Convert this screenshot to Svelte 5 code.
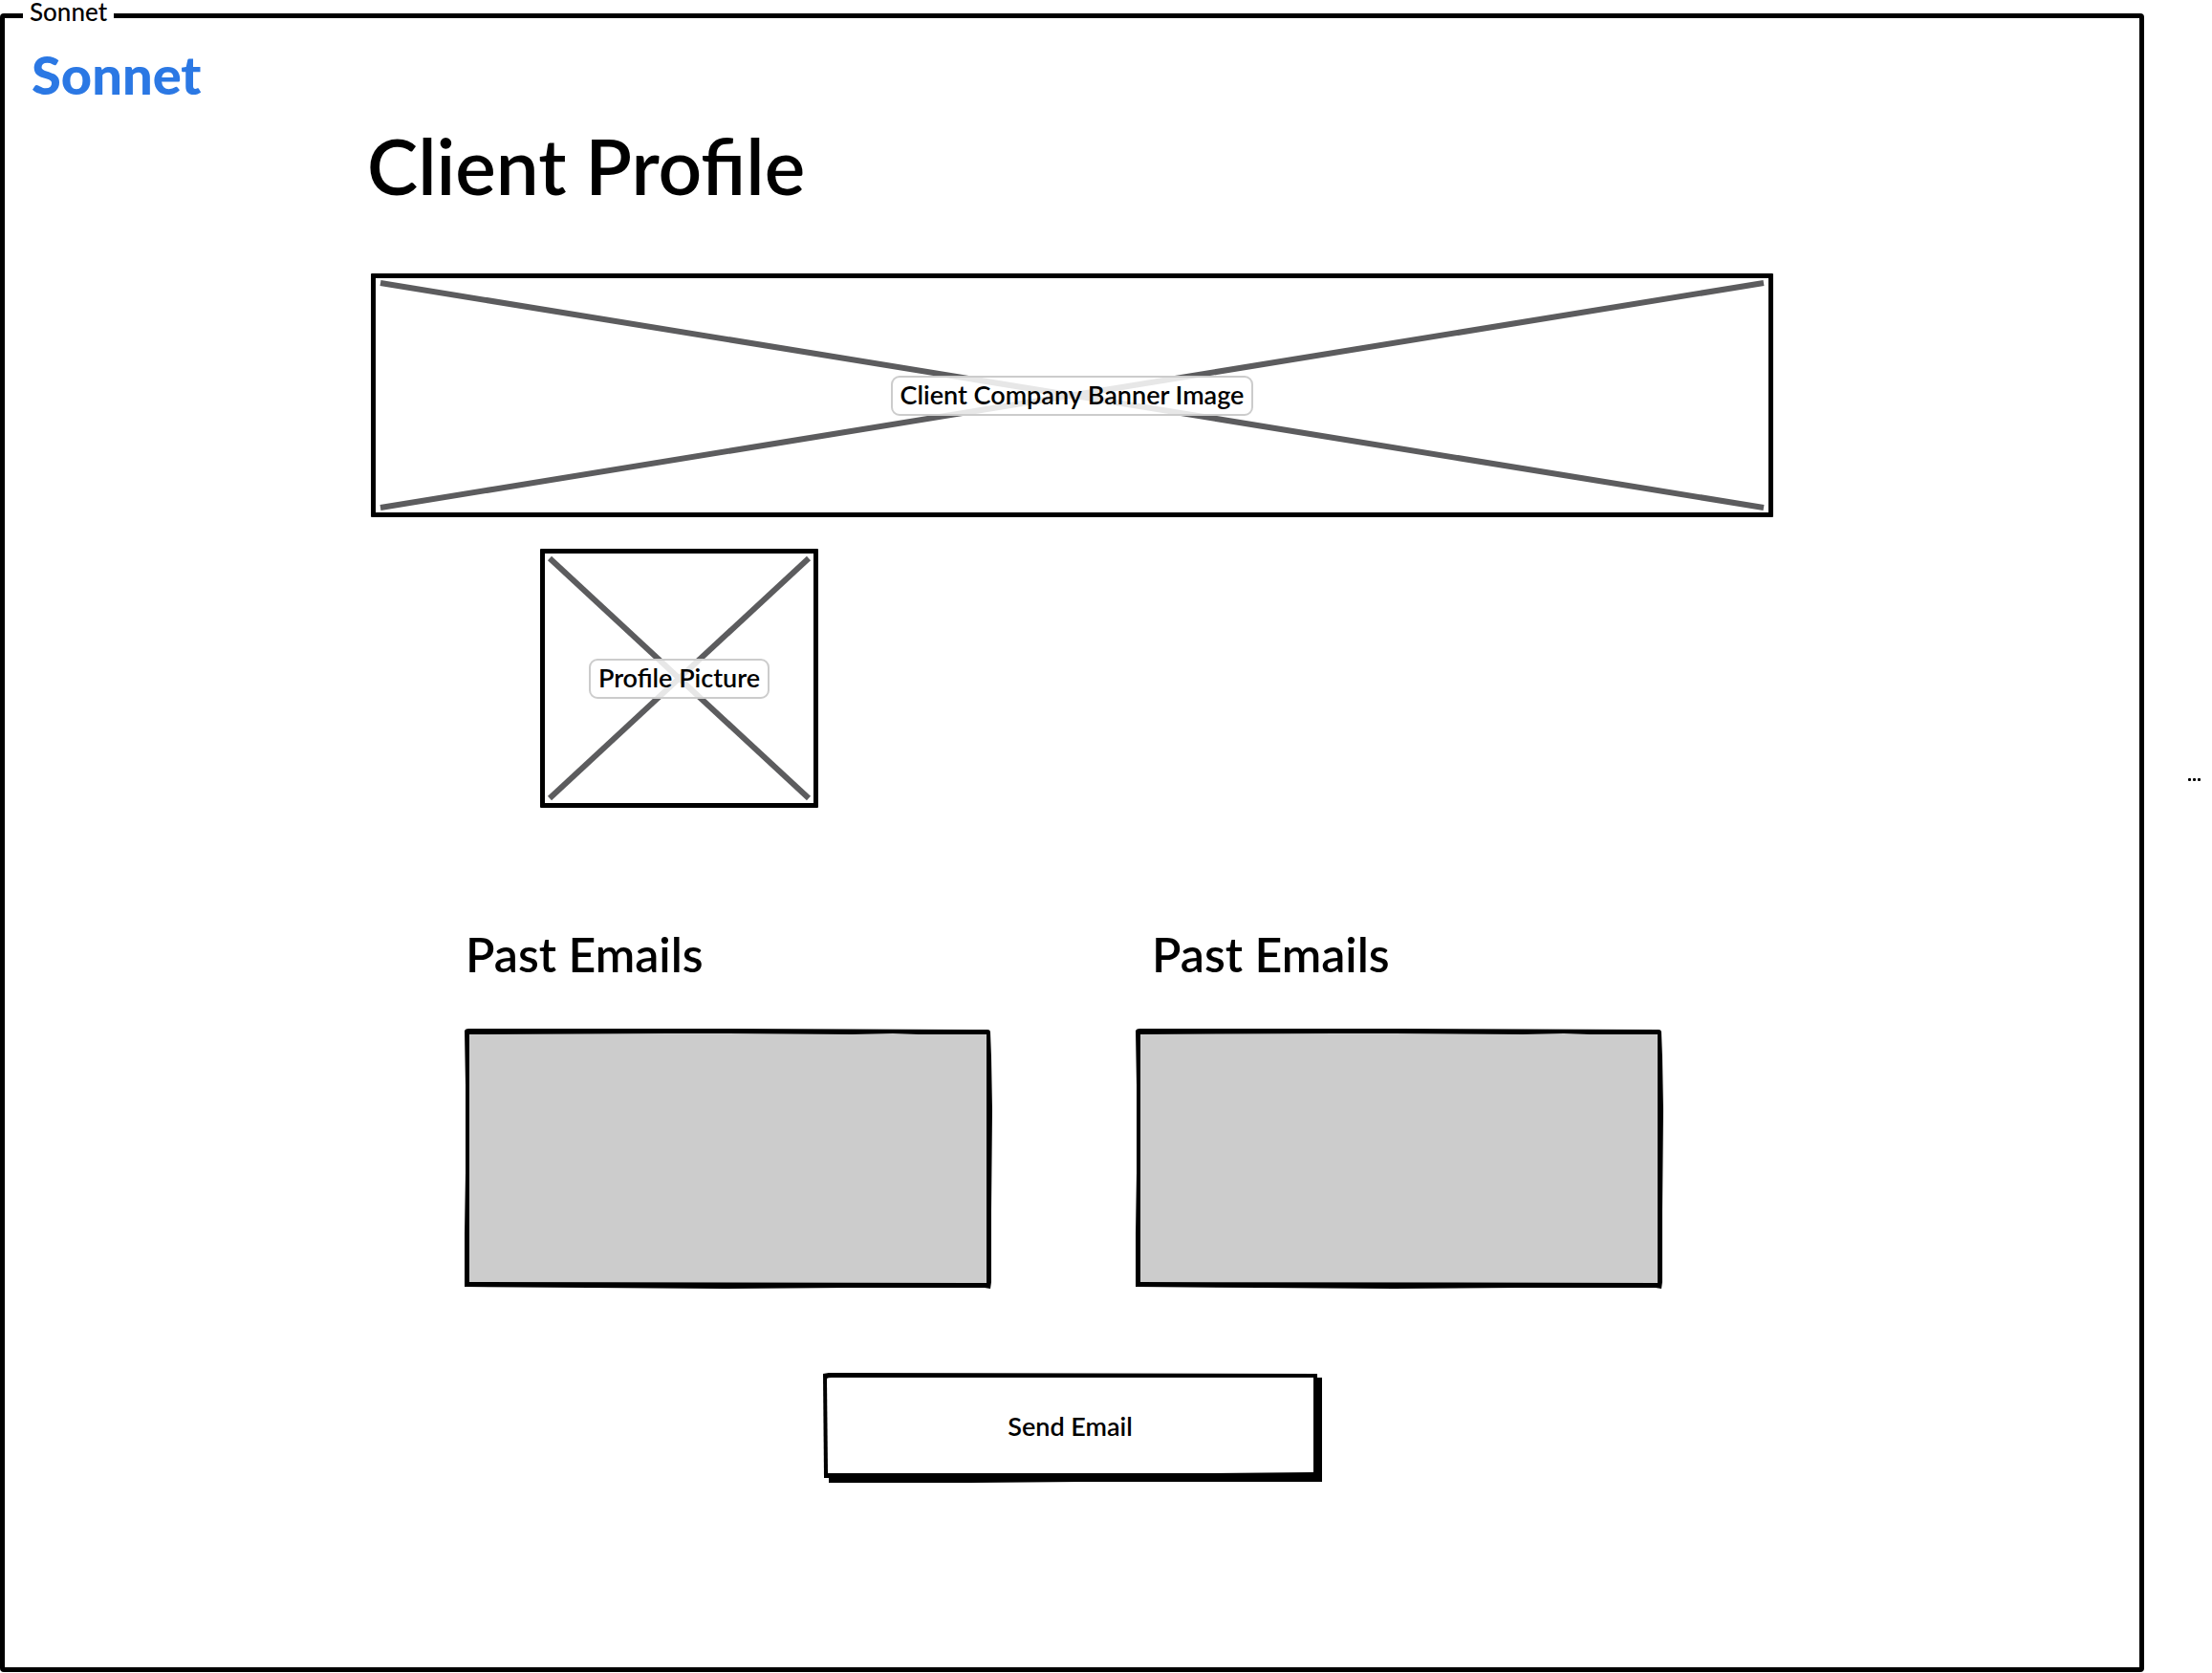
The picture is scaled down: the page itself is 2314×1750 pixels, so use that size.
<script>
  const emailGroups = ['Past Emails', 'Past Emails'];
</script>

{#snippet placeholder(label, kind)}
  <figure class="placeholder {kind}">
    <svg class="cross" aria-hidden="true">
      <line x1="0" y1="0" x2="100%" y2="100%" />
      <line x1="100%" y1="0" x2="0" y2="100%" />
    </svg>
    <figcaption>{label}</figcaption>
  </figure>
{/snippet}

<div class="page">
  <fieldset class="frame">
    <legend>Sonnet</legend>
    <header class="brand">Sonnet</header>
    <main>
      <h1>Client Profile</h1>
      {@render placeholder('Client Company Banner Image', 'banner')}
      {@render placeholder('Profile Picture', 'portrait')}

      <div class="groups">
        {#each emailGroups as title}
          <section>
            <h2>{title}</h2>
            <svg class="box" viewBox="0 0 552 272" preserveAspectRatio="none" aria-hidden="true">
              <path
                d="M0 2Q1 0 4 0L275 0L547 1Q550 1 550 4L551 30L552 85L551 190L551 265L550 272L544 271L400 271L270 272L130 271L0 270L0 215L1 150L1 60Z"
              />
              <path
                class="fill"
                d="M5 6L210 5L270 5L405 6L448 5L475 6L546 6L546 140L546 266L5 265Z"
              />
            </svg>
          </section>
        {/each}
      </div>

      <button type="button">
        <svg viewBox="0 0 523 115" preserveAspectRatio="none" aria-hidden="true">
          <path d="M6 5L522 5L522 114L270 114L150 115L6 115Z" />
          <path d="M0 1L6 0L517 1L517 109L1 110Z" />
          <path
            class="fill"
            d="M4 6Q5 5 9 5L513 5L513 104L400 105L330 105L265 105L200 105L120 105L60 105L5 105Z"
          />
        </svg>
        <span>Send Email</span>
      </button>
    </main>
  </fieldset>
  <aside>
    <svg viewBox="0 0 13 4" width="13" height="4" role="img" aria-label="More">
      <rect x="0" y="0" width="3" height="3" rx="1" />
      <rect x="5" y="0" width="3" height="3" rx="1" />
      <rect x="10" y="0" width="3" height="3" rx="1" />
    </svg>
  </aside>
</div>

<style>
  :global(body) {
    background: #fff;
  }

  .page {
    display: grid;
    grid-template-columns: minmax(0, 1fr) 71px;
    min-height: 100vh;
    box-sizing: border-box;
    padding-bottom: 1px;
    font-family: Lato, 'Open Sans', sans-serif;
    font-weight: 600;
    color: #000;
  }

  .frame {
    min-width: 0;
    margin: 0;
    padding: 0 0 190px;
    border: 5px solid #000;
    border-radius: 4px;
  }

  legend {
    height: 32px;
    margin-left: 19px;
    padding: 0 7px;
    font-size: 26px;
    font-weight: 500;
    line-height: 24px;
  }

  .brand {
    padding: 10px 28px 2px;
    font-size: 56px;
    line-height: 72px;
    font-weight: 900;
    color: #2b78e4;
  }

  main {
    display: flex;
    flex-direction: column;
    max-width: 1467px;
    margin: 0 auto;
  }

  h1,
  h2 {
    margin: 0;
    font-weight: 600;
  }

  h1 {
    margin: 7px 0 63px -4px;
    font-size: 80px;
    line-height: 100px;
  }

  .placeholder {
    display: grid;
    box-sizing: border-box;
    margin: 0;
    padding: 5px;
    border: 5px solid #000;
    border-radius: 1px;
  }

  .cross,
  figcaption {
    grid-area: 1 / 1;
  }

  .cross {
    width: 100%;
    height: 100%;
    overflow: visible;
    stroke: #5c5c5e;
    stroke-width: 6px;
  }

  figcaption {
    place-self: center;
    z-index: 1;
    box-sizing: border-box;
    padding: 0 8px 2px;
    border: 2px solid #ccc;
    border-radius: 9px;
    background: rgb(255 255 255 / 85%);
    font-size: 27px;
    line-height: 36px;
    white-space: nowrap;
  }

  .banner {
    height: 255px;
  }

  .portrait {
    width: 291px;
    height: 271px;
    margin: 33px 0 0 177px;
  }

  .groups {
    display: grid;
    grid-template-columns: 1fr 1fr;
    gap: 150px;
    margin: 121px 115px 88px 98px;
  }

  h2 {
    padding-left: 1px;
    font-size: 50px;
    line-height: 64px;
    margin-bottom: 46px;
  }

  section + section h2 {
    padding-left: 17px;
  }

  .box {
    display: block;
    width: 100%;
    height: 272px;
  }

  .box .fill {
    fill: #ccc;
  }

  button {
    display: grid;
    align-self: center;
    width: 523px;
    height: 115px;
    margin-left: 2px;
    padding: 0;
    border: 0;
    background: none;
    font: inherit;
    font-size: 27px;
    color: inherit;
    cursor: pointer;
  }

  button svg,
  button span {
    grid-area: 1 / 1;
  }

  button svg {
    width: 100%;
    height: 115px;
  }

  button .fill {
    fill: #fff;
  }

  button span {
    place-self: center;
    padding: 0 6px 4px 0;
  }

  aside {
    display: flex;
    justify-content: flex-end;
    padding: 814px 12px 0 0;
  }
</style>
